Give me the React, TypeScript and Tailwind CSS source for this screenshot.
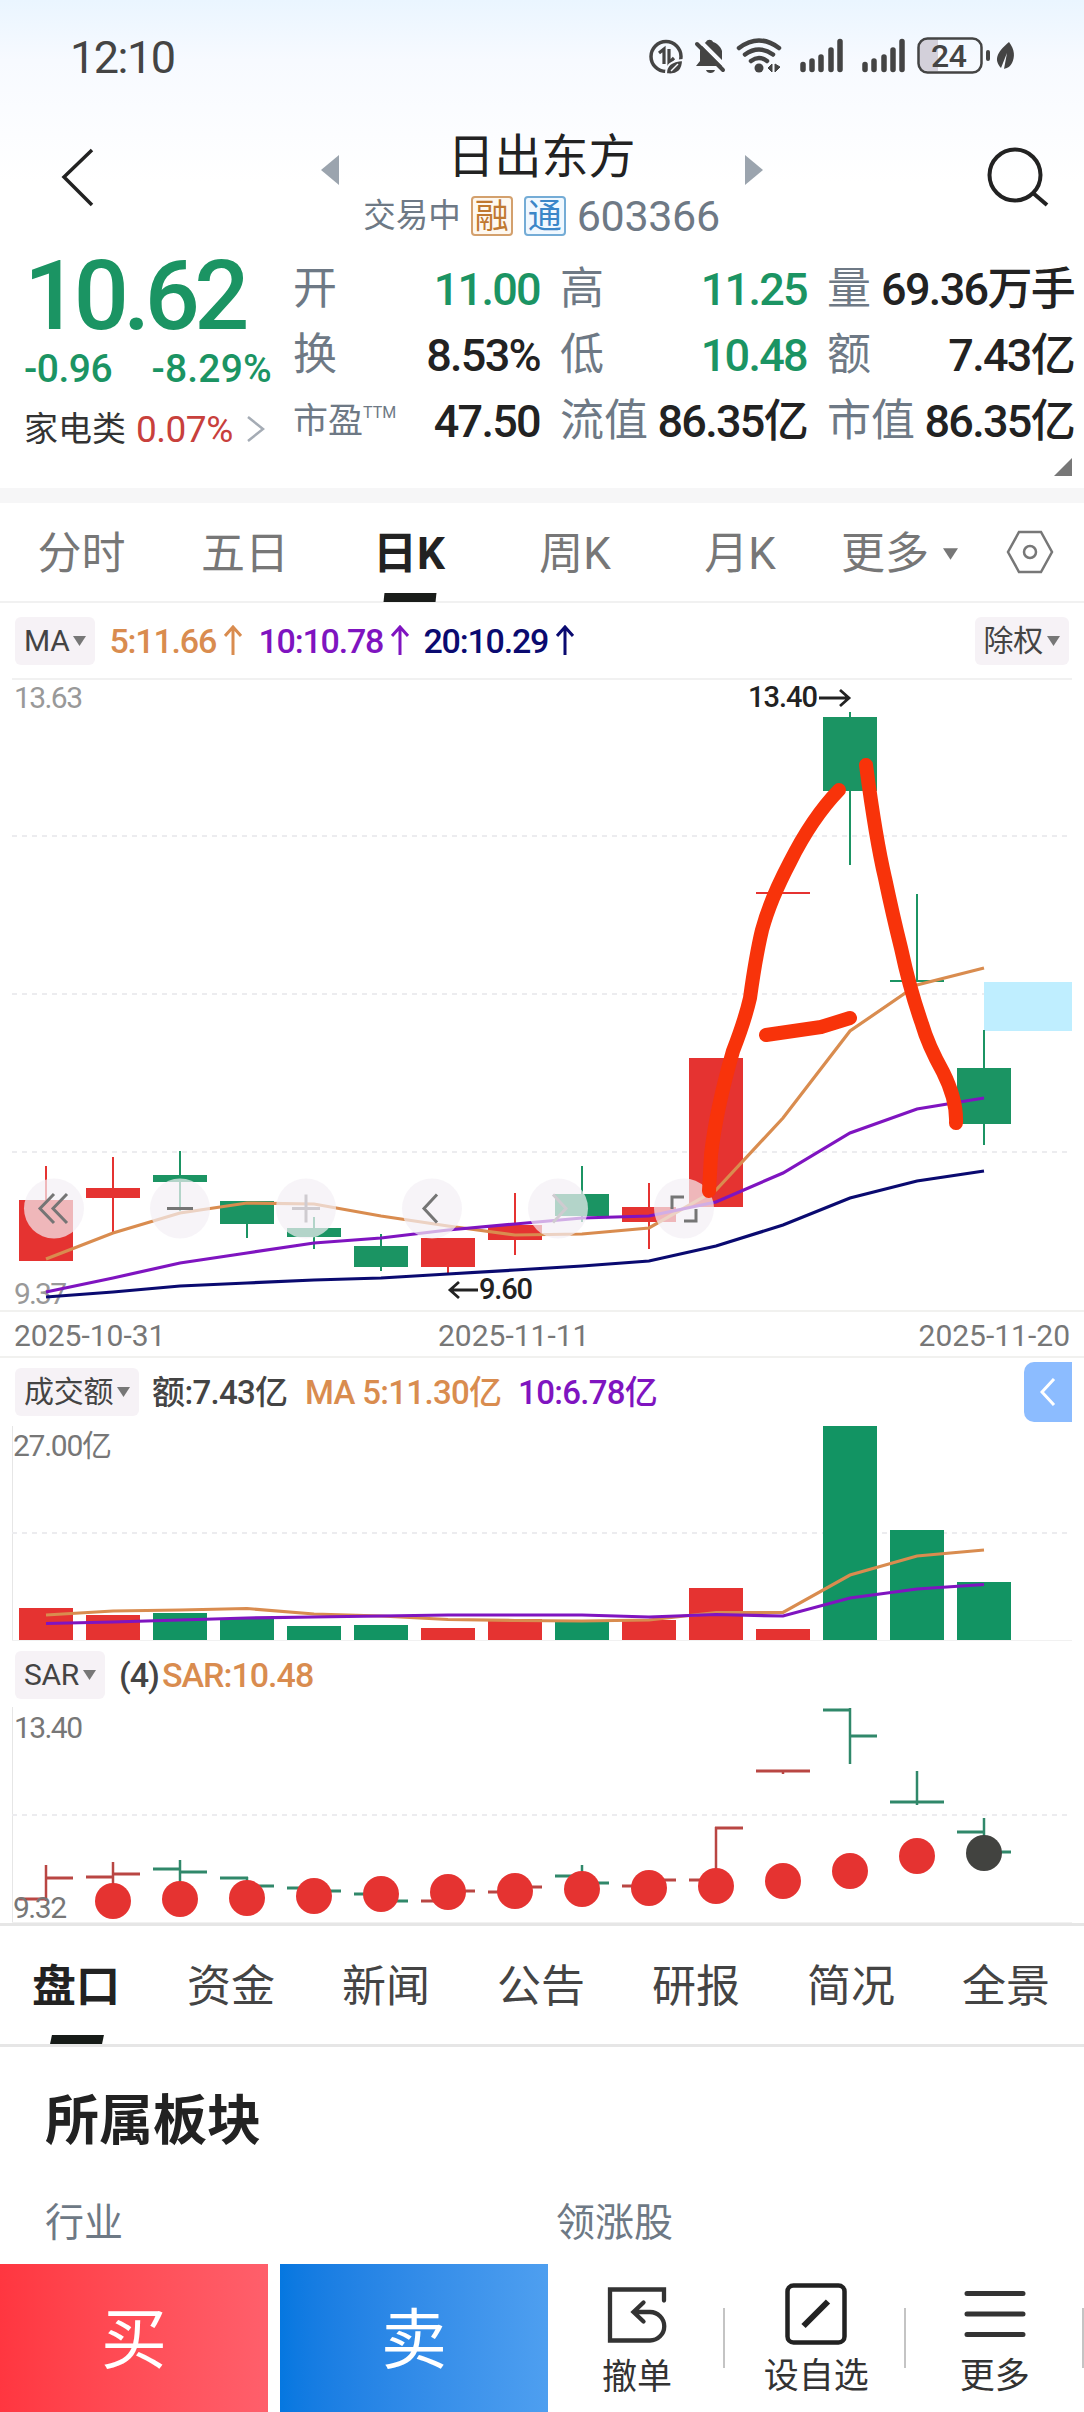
import clsx from "clsx";

const RED = "#e53331";
const GREEN = "#1b9463";
const ORANGE = "#d98c4f";
const PURPLE = "#7f14c0";
const NAVY = "#0a0a70";

const STEP = 67;
const FIRST_X = 46;
const BODY = 54;

const xAt = (i: number) => FIRST_X + i * STEP;
const toPoints = (values: number[]) =>
  values.map((y, i) => `${xAt(i)},${y}`).join(" ");

// [up, body top, body bottom, high, low]
const candles: [boolean, number, number, number, number][] = [
  [true, 1200, 1261, 1166, 1261],
  [true, 1188, 1198, 1157, 1232],
  [false, 1175, 1182, 1151, 1211],
  [false, 1201, 1224, 1201, 1238],
  [false, 1228, 1237, 1217, 1249],
  [false, 1246, 1267, 1234, 1271],
  [true, 1238, 1267, 1238, 1273],
  [true, 1225, 1240, 1193, 1255],
  [false, 1194, 1216, 1166, 1222],
  [true, 1207, 1222, 1183, 1249],
  [true, 1058, 1207, 1058, 1207],
  [true, 892, 894, 892, 894],
  [false, 717, 791, 712, 865],
  [false, 980, 982, 894, 982],
  [false, 1068, 1124, 1030, 1145],
];

const ma5 = [1259, 1233, 1213, 1203, 1204, 1216, 1226, 1235, 1234, 1228, 1190, 1118, 1031, 985, 968];
const ma10 = [1292, 1278, 1263, 1253, 1243, 1238, 1230, 1224, 1218, 1216, 1202, 1173, 1133, 1109, 1098];
const ma20 = [1297, 1292, 1286, 1283, 1280, 1278, 1274, 1270, 1266, 1261, 1246, 1225, 1198, 1181, 1171];

const volumes: [boolean, number][] = [
  [true, 1608],
  [true, 1615],
  [false, 1613],
  [false, 1618],
  [false, 1626],
  [false, 1625],
  [true, 1628],
  [true, 1619],
  [false, 1621],
  [true, 1620],
  [true, 1588],
  [true, 1629],
  [false, 1426],
  [false, 1530],
  [false, 1582],
];
const volMa5 = [1615, 1611, 1610, 1608.5, 1614, 1616, 1619.5, 1620.5, 1621, 1620, 1612.5, 1612.5, 1575, 1556, 1550];
const volMa10 = [1623.5, 1622, 1620, 1618, 1617, 1616, 1615, 1615, 1615, 1617, 1614.5, 1616, 1598, 1589, 1584.5];

// [up, open, close, high, low]
const sarBars: [boolean, number, number, number, number][] = [
  [true, 1899, 1878, 1865, 1901],
  [true, 1877, 1874, 1862, 1895],
  [false, 1869, 1872, 1860, 1890],
  [false, 1878, 1886, 1877, 1890],
  [false, 1888, 1891, 1885, 1896],
  [false, 1894, 1901, 1892, 1902],
  [true, 1901, 1891, 1890, 1902],
  [true, 1892, 1887, 1880, 1895],
  [false, 1876, 1883, 1865, 1890],
  [true, 1886, 1880, 1876, 1892],
  [true, 1880, 1828, 1827, 1882],
  [true, 1771, 1771, 1770, 1774],
  [false, 1710, 1736, 1708, 1764],
  [false, 1802, 1802, 1771, 1805],
  [false, 1832, 1852, 1818, 1858],
];
const sarDots = [1901, 1899, 1898, 1896, 1894, 1892, 1891, 1889, 1888, 1886, 1881, 1871, 1856, 1853];

const StatusBar = () => (
  <div className="flex h-[112px] items-center pl-[70px] text-[#444]">
    <span className="w-[578px] pt-[3px] text-[45px] leading-none tracking-[-1.500px]">12:10</span>
    <svg className="h-[44px] w-[370px]" viewBox="648 34 370 44" fill="none" stroke="#444">
      <circle cx="666" cy="56.500" r="15" strokeWidth="3.500" />
      <path d="M659 53l5-4v15M669 49v14l5-5" strokeWidth="3.200" />
      <path d="M666 74c0-9 5-13 17-14 0 10-5 16-17 14z" fill="#444" stroke="#f8faff" strokeWidth="2" />
      <path d="M671 71l7-7" stroke="#f8faff" strokeWidth="1.500" />
      <path d="M696 66l4-5v-9c0-5 3-8 6-10 1-3 6-3 7 0 4 1 8 5 9 9v10l4 5z" fill="#444" stroke="none" />
      <path d="M706 70h9c-1 4-8 4-9 0z" fill="#444" stroke="none" />
      <path d="M699 40l28 28" stroke="#f8faff" strokeWidth="4" />
      <path d="M697 44l26 26" strokeWidth="4" strokeLinecap="round" />
      <path d="M739 48q20-15 40 0M745 54.500q14-10 28 0M751 61q8-6 16 0" strokeWidth="4.500" strokeLinecap="round" />
      <circle cx="759" cy="68" r="4.500" fill="#444" stroke="none" />
      <path d="M772 64v8l-4-4zM775 64v8l5-5z" fill="#444" strokeWidth="1" />
      <g strokeWidth="5.500" strokeLinecap="round">
        <path d="M803 64.500v5M812 61v8.500M821 57v12.500M831 50v19.500M840 41.500v28" />
        <path d="M865 64.500v5M874 61v8.500M884 57v12.500M893 50v19.500M902 41.500v28" />
      </g>
      <path d="M938 39h-10q-9 0-9 9v14q0 9 9 9h10z" fill="#d3d0da" stroke="none" />
      <rect x="918.500" y="38.500" width="63" height="34" rx="9" strokeWidth="2.500" />
      <path d="M988 52v7" strokeWidth="4" strokeLinecap="round" />
      <path d="M1009 42c6 8 6 15 3 21-2 4-5 5-8 6l3-16-6 15c-7-8-5-15 8-26z" fill="#444" stroke="none" />
      <text x="931" y="67" fontSize="32" fontWeight="500" fill="#444" stroke="none" textLength="36">24</text>
    </svg>
  </div>
);

const Header = () => (
  <div className="flex h-[130px] items-start justify-between pl-[60px] pr-[34px]">
    <svg className="mt-[36px] h-[60px] w-[34px]" viewBox="0 0 34 60" fill="none" stroke="#222" strokeWidth="3.500">
      <path d="M32 2L4 29l28 28" />
    </svg>
    <div className="flex flex-col items-center pl-[3px]">
      <div className="flex h-[86px] items-center">
        <svg className="mt-[30px] h-[30px] w-[18px]" viewBox="0 0 18 30" fill="#9ba4ae">
          <path d="M18 0v30L0 15z" />
        </svg>
        <h1 className="w-[406px] pt-[3px] text-center text-[47px] leading-none text-[#222]">日出东方</h1>
        <svg className="mt-[30px] h-[30px] w-[18px]" viewBox="0 0 18 30" fill="#9ba4ae">
          <path d="M0 0v30l18-15z" />
        </svg>
      </div>
      <div className="flex h-[36px] items-center text-[32.500px] leading-none text-[#6e7985]">
        <span>交易中</span>
        <span className="ml-[10px] flex h-[40px] w-[42px] items-center justify-center rounded-[4px] border-2 border-[#d3a06d] bg-[#fef8f0] text-[34px] text-[#c07830]">
          融
        </span>
        <span className="ml-[11px] flex h-[40px] w-[42px] items-center justify-center rounded-[4px] border-2 border-[#74acd6] bg-[#f0f8ff] text-[34px] text-[#3a86c8]">
          通
        </span>
        <span className="ml-[11px] text-[43px] tracking-[-0.300px]">603366</span>
      </div>
    </div>
    <svg className="mt-[34px] h-[62px] w-[64px]" viewBox="986 146 64 62" fill="none" stroke="#222" strokeWidth="4">
      <circle cx="1015" cy="175" r="25.500" />
      <path d="M1033 193l14 12" />
    </svg>
  </div>
);

const stats = [
  [
    { label: "开", value: "11.00", green: true },
    { label: "高", value: "11.25", green: true },
    { label: "量", value: "69.36万手" },
  ],
  [
    { label: "换", value: "8.53%" },
    { label: "低", value: "10.48", green: true },
    { label: "额", value: "7.43亿" },
  ],
  [
    { label: "市盈", value: "47.50", ttm: true },
    { label: "流值", value: "86.35亿" },
    { label: "市值", value: "86.35亿" },
  ],
];

const Quote = () => (
  <div className="relative flex h-[246px] pl-[24px] pr-[11px]">
    <div className="w-[269px] shrink-0 text-[#1b9463]">
      <div className="mt-[10px] h-[88px] text-[97px] font-medium leading-[88px] tracking-[-5.500px]">10.62</div>
      <div className="mt-[9px] flex h-[40px] justify-between pr-[21px] text-[39px] font-medium leading-[40px] tracking-[-0.500px]">
        <span>-0.96</span>
        <span className="tracking-[0.200px]">-8.29%</span>
      </div>
      <div className="mt-[20px] flex h-[40px] items-center text-[34px] leading-none text-[#333]">
        家电类
        <span className="ml-[10px] text-[37px] tracking-[-0.500px] text-[#c8403c]">0.07%</span>
        <svg className="ml-[14px] h-[26px] w-[18px]" viewBox="0 0 18 26" fill="none" stroke="#a5acb5" strokeWidth="2.500">
          <path d="M1 1l15 12L1 25" />
        </svg>
      </div>
    </div>
    <div className="flex flex-1 flex-col pt-[14px]">
      {stats.map((row, i) => (
        <div key={i} className="flex h-[66px] items-center gap-[21px]">
          {row.map((s) => (
            <div key={s.label} className="flex w-[246px] items-center justify-between whitespace-nowrap leading-none">
              {s.ttm ? (
                <span className="flex items-start text-[35px] text-[#6e7985]">
                  市盈<span className="mt-[1px] text-[16px]">TTM</span>
                </span>
              ) : (
                <span className="text-[44px] text-[#6e7985]">{s.label}</span>
              )}
              <span
                className={clsx(
                  "-mr-[1px] text-[45px] font-medium tracking-[-1.700px]",
                  s.green ? "text-[#1b9463]" : "text-[#222]"
                )}
              >
                {s.value}
              </span>
            </div>
          ))}
        </div>
      ))}
    </div>
    <div className="absolute bottom-[12px] right-[12px] h-[18px] w-[18px] bg-[#777] [clip-path:polygon(100%_0,100%_100%,0_100%)]" />
  </div>
);

const Caret = ({ className }: { className?: string }) => (
  <svg className={clsx("h-[10px] w-[13px]", className)} viewBox="0 0 13 10" fill="#777">
    <path d="M0 0h13L6.500 10z" />
  </svg>
);

const PeriodTabs = () => (
  <div className="flex h-[100px] items-center border-b-2 border-[#f1f1f1] pt-[3px] text-[44px] leading-none text-[#777]">
    <span className="w-[163px] text-center">分时</span>
    <span className="w-[164px] text-center">五日</span>
    <span className="relative flex h-full w-[166px] items-center justify-center pr-[2px] font-bold text-[#222]">
      日K
      <i className="absolute bottom-[-1px] left-[57px] h-[9px] w-[52px] -skew-x-6 bg-[#1a1c1a]" />
    </span>
    <span className="w-[164px] text-center">周K</span>
    <span className="w-[166px] text-center">月K</span>
    <span className="ml-[18px] w-[102px]">更多</span>
    <Caret className="h-[12px] w-[15px]" />
    <svg className="-mt-[4px] ml-[48px] h-[44px] w-[48px]" viewBox="0 0 48 44" fill="none" stroke="#777" strokeWidth="2.500">
      <path d="M13 2h22l11 20-11 20H13L2 22z" />
      <circle cx="24" cy="22" r="6" />
    </svg>
  </div>
);

const Chip = ({ children }: { children: string }) => (
  <span className="flex h-[48px] items-center rounded-[6px] bg-[#f6f2f6] pl-[9px] pr-[9px] text-[30px] font-normal tracking-[-0.300px] text-[#444]">
    {children}
    <Caret className="ml-[4px]" />
  </span>
);

const UpArrow = () => (
  <svg className="mb-[2px] ml-[8px] h-[30px] w-[18px]" viewBox="0 0 18 30" fill="none" stroke="currentColor" strokeWidth="3">
    <path d="M9 30V2M1 11L9 2l8 9" />
  </svg>
);

const Grid = ({ y }: { y: number }) => (
  <line x1="12" x2="1072" y1={y} y2={y} stroke="#ececef" strokeWidth="2" strokeDasharray="5 5" />
);

const Line = ({ values, color }: { values: number[]; color: string }) => (
  <polyline points={toPoints(values)} fill="none" stroke={color} strokeWidth="3.200" />
);

const toolIcons = [
  { x: 54, d: "M54 1194l-14 14.500 14 14.500M67 1194l-14 14.500 14 14.500", faded: false },
  { x: 180, d: "M167 1208.500h26", faded: false },
  { x: 306, d: "M292 1208.500h28M306 1194.500v28", faded: true },
  { x: 432, d: "M437 1194.500l-13 14 13 14", faded: false },
  { x: 558, d: "M553 1194.500l13 14-13 14", faded: true },
  { x: 684, d: "M684 1197h-12v12M684 1221h12v-12", faded: false },
];

const CandleChart = () => (
  <svg className="block h-[632px] w-full" viewBox="0 678 1084 632">
    <path d="M12 679h1060" stroke="#f1f1f1" strokeWidth="2" />
    <Grid y={836} />
    <Grid y={994} />
    <Grid y={1152} />
    <text x="14" y="708" fontSize="30" fill="#999" textLength="69">13.63</text>
    <text x="14" y="1304" fontSize="30" fill="#999" textLength="53">9.37</text>
    <rect x="984" y="982" width="88" height="49" fill="#bfeeff" />
    {candles.map(([up, top, bottom, high, low], i) => (
      <g key={i} fill={up ? RED : GREEN}>
        <rect x={xAt(i) - 1} y={high} width="2" height={low - high} />
        <rect x={xAt(i) - BODY / 2} y={top} width={BODY} height={bottom - top} />
      </g>
    ))}
    <Line values={ma5} color={ORANGE} />
    <Line values={ma10} color={PURPLE} />
    <Line values={ma20} color={NAVY} />
    <g fontSize="29" fontWeight="500" fill="#222">
      <text x="748" y="707" textLength="70">13.40</text>
      <text x="479" y="1299" textLength="54">9.60</text>
    </g>
    <g fill="none" stroke="#222" strokeWidth="2.800">
      <path d="M819 698h30M840 690l9 8-9 8" />
      <path d="M478 1290h-28M459 1282l-9 8 9 8" />
    </g>
    {toolIcons.map((t) => (
      <g key={t.x}>
        <circle cx={t.x} cy="1208.500" r="30" fill="#f4eff5" fillOpacity="0.7" />
        <path d={t.d} fill="none" stroke={t.faded ? "#cfcbd0" : "#757575"} strokeWidth="3" />
      </g>
    ))}
    {/* hand-drawn marks */}
    <g fill="none" stroke="#f8330a" strokeWidth="14" strokeLinecap="round" strokeLinejoin="round">
      <path d="M839 790Q812 818 790 862Q770 900 762 930Q756 955 750 998Q745 1020 733 1051Q716 1110 711 1155L709 1191" />
      <path d="M866 765Q876 840 885 878Q893 916 901 948Q910 990 922 1024Q928 1045 943 1072Q957 1100 956 1123" />
      <path d="M766 1035L821 1027L850 1018" />
    </g>
  </svg>
);

const VolumeChart = () => (
  <svg className="block h-[216px] w-full" viewBox="0 1426 1084 216">
    <path d="M12.500 1426v215" stroke="#e6e6e6" />
    <path d="M12 1640.500h1060" stroke="#f1f1f1" />
    <Grid y={1533} />
    <text x="13" y="1456" fontSize="30" fill="#777" textLength="99">27.00亿</text>
    {volumes.map(([up, top], i) => (
      <rect key={i} x={xAt(i) - 27} y={top} width={BODY} height={1640 - top} fill={up ? RED : "#129463"} />
    ))}
    <Line values={volMa5} color={ORANGE} />
    <Line values={volMa10} color={PURPLE} />
  </svg>
);

const SarChart = () => (
  <svg className="block h-[216px] w-full overflow-visible" viewBox="0 1707 1084 216">
    <path d="M12.500 1707v215" stroke="#e6e6e6" />
    <path d="M12 1922.500h1060" stroke="#f1f1f1" />
    <Grid y={1815} />
    {sarBars.map(([up, open, close, high, low], i) => (
      <g key={i} fill="none" stroke={up ? "#b94643" : "#30886a"}>
        <path d={`M${xAt(i)} ${high}V${low}`} strokeWidth="2.500" />
        <path d={`M${xAt(i) - 27} ${open}h28M${xAt(i) - 1} ${close}h28`} strokeWidth="3" />
      </g>
    ))}
    {sarDots.map((y, i) => (
      <circle key={i} cx={xAt(i + 1)} cy={y} r="18" fill={i === sarDots.length - 1 ? "#424340" : RED} />
    ))}
    <g fontSize="30" fill="#777">
      <text x="14" y="1738" textLength="69">13.40</text>
      <text x="13" y="1918" textLength="54">9.32</text>
    </g>
  </svg>
);

const infoTabs = ["盘口", "资金", "新闻", "公告", "研报", "简况", "全景"];

const InfoTabs = () => (
  <div className="flex h-[124px] border-y-[3px] border-[#e6e6e6] text-[44px] leading-none text-[#444]">
    {infoTabs.map((tab, i) => (
      <span
        key={tab}
        className={clsx(
          "relative flex w-[155px] shrink-0 items-center justify-center pr-[3px] pt-[3px]",
          i === 0 && "font-bold text-[#222]"
        )}
      >
        {tab}
        {i === 0 && <i className="absolute bottom-0 left-[51px] h-[9px] w-[52px] -skew-x-12 bg-[#161b18]" />}
      </span>
    ))}
  </div>
);

const Divider = () => <i className="h-[60px] w-[2px] bg-[#c4c4c4]" />;

const BottomBar = () => (
  <div className="flex h-[148px] bg-white text-[35px] leading-none text-[#333]">
    <button className="w-[268px] bg-linear-to-r from-[#ff3640] to-[#ff5f6b] pt-[6px] text-[66px] text-white">买</button>
    <button className="ml-[12px] w-[268px] bg-linear-to-r from-[#0577e0] to-[#4e9ff0] pt-[6px] text-[66px] text-white">卖</button>
    <div className="flex w-[175px] flex-col items-center pl-[3px] pt-[20px]">
      <svg className="h-[62px] w-[62px]" viewBox="608 2284 62 62" fill="none" stroke="#333" strokeWidth="4.300" strokeLinecap="round">
        <path d="M666 2300.500v-11h-54v51h40a14.200 14.200 0 0 0 0-28.500h-16M645.500 2302.500l-10 9.500 10 9.500" />
      </svg>
      <span className="mt-[14px]">撤单</span>
    </div>
    <div className="flex flex-1 items-center">
      <Divider />
      <div className="flex flex-1 flex-col items-center pl-[4px]">
        <svg className="h-[62px] w-[62px]" viewBox="0 0 62 62" fill="none" stroke="#222" strokeWidth="4.500">
          <rect x="2.500" y="2.500" width="57" height="57" rx="6" />
          <path d="M18.500 43L43 18.500" strokeWidth="6" />
        </svg>
        <span className="mt-[14px]">设自选</span>
      </div>
      <Divider />
      <div className="flex flex-1 flex-col items-center pl-[2px]">
        <svg className="h-[62px] w-[62px]" viewBox="0 0 62 62" fill="none" stroke="#333" strokeWidth="5" strokeLinecap="round">
          <path d="M3 10.500h56M3 31h56M3 51.500h56" />
        </svg>
        <span className="mt-[14px]">更多</span>
      </div>
      <Divider />
    </div>
  </div>
);

export default function App() {
  return (
    <div className="flex h-[2412px] w-[1084px] flex-col overflow-hidden bg-white font-['Roboto','Noto_Sans_CJK_SC',sans-serif]">
      <div className="bg-linear-to-b from-[#eaf5ff] via-[#f7faff] via-25% to-white to-75%">
        <StatusBar />
        <Header />
      </div>
      <Quote />
      <div className="h-[15px] bg-[#f6f6f7]" />
      <PeriodTabs />

      <div className="flex h-[75px] items-center justify-between px-[15px] text-[34px] font-medium leading-none tracking-[-1.200px]">
        <div className="flex items-center">
          <Chip>MA</Chip>
          <span className="ml-[14px] flex w-[149px] items-center text-[#d98c4f]">
            5:11.66
            <UpArrow />
          </span>
          <span className="flex w-[165px] items-center text-[#7f14c0]">
            10:10.78
            <UpArrow />
          </span>
          <span className="flex items-center text-[#0a0a70]">
            20:10.29
            <UpArrow />
          </span>
        </div>
        <Chip>除权</Chip>
      </div>

      <CandleChart />
      <div className="flex h-[48px] items-center border-y-2 border-[#f1f1ef] px-[14px] pt-[3px] text-[30px] leading-none text-[#777]">
        <span className="w-[424px]">2025-10-31</span>
        <span className="flex-1">2025-11-11</span>
        <span>2025-11-20</span>
      </div>

      <div className="flex h-[68px] items-center pl-[15px] pr-[12px] text-[33px] font-medium leading-none tracking-[-0.700px] text-[#444]">
        <Chip>成交额</Chip>
        <span className="ml-[13px] w-[153px] whitespace-nowrap">额:7.43亿</span>
        <span className="w-[213px] whitespace-nowrap text-[#d98c4f]">MA 5:11.30亿</span>
        <span className="flex-1 text-[#7f14c0]">10:6.78亿</span>
        <span className="flex h-[60px] w-[48px] items-center justify-center rounded-l-[10px] bg-[#8cbcff]">
          <svg className="h-[28px] w-[16px]" viewBox="0 0 16 28" fill="none" stroke="#fff" strokeWidth="3">
            <path d="M14 1L2 14l12 13" />
          </svg>
        </span>
      </div>
      <VolumeChart />

      <div className="flex h-[65px] items-center pl-[15px] text-[34px] font-medium leading-none tracking-[-1px]">
        <Chip>SAR</Chip>
        <span className="ml-[14px] text-[#444]">(4)</span>
        <span className="ml-[3px] text-[#d98c4f]">SAR:10.48</span>
      </div>
      <SarChart />

      <InfoTabs />
      <h2 className="mt-[48px] h-[56px] pl-[45px] text-[54px] font-bold leading-[54px] text-[#222]">所属板块</h2>
      <div className="mt-[47px] flex h-[66px] px-[45px] text-[39px] leading-[50px] text-[#6e7985]">
        <span className="w-[511px]">行业</span>
        <span>领涨股</span>
      </div>
      <BottomBar />
    </div>
  );
}
